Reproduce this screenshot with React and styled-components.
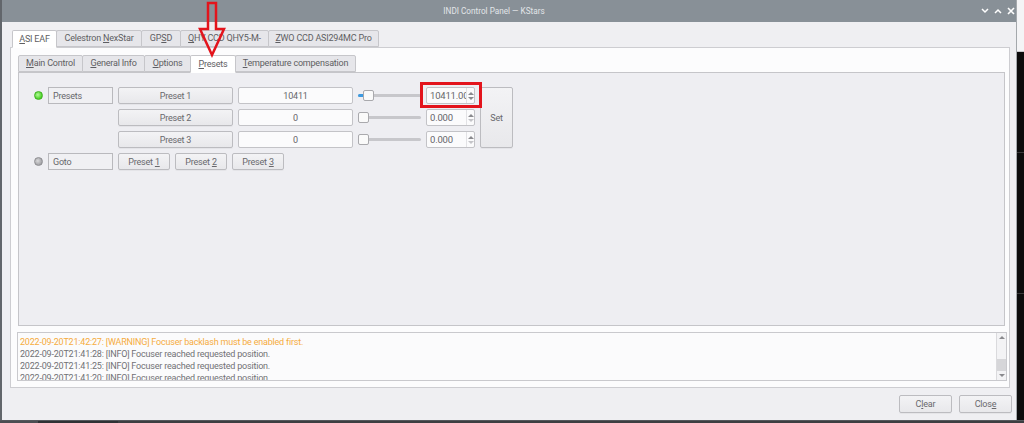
import React from 'react';
import styled, { createGlobalStyle } from 'styled-components';

const GlobalStyle = createGlobalStyle`
  html, body {
    margin: 0;
    padding: 0;
    background: #1a1a1a;
    overflow: hidden;
  }
  * {
    box-sizing: border-box;
  }
`;

const Screen = styled.div`
  width: 1024px;
  height: 423px;
  display: flex;
  flex-direction: column;
  font-family: Roboto, "Liberation Sans", sans-serif;
  font-size: 9px;
  letter-spacing: -0.2px;
  color: #6a6a6e;
  position: relative;
`;

const ScreenRow = styled.div`
  display: flex;
  height: 420px;
`;

const BottomStrip = styled.div`
  flex: 1;
  display: flex;
  background: #3c3e41;
  border-top: 1px solid #55585c;
`;

const BottomSeg = styled.div`
  width: ${(p) => p.$w}px;
  background: ${(p) => p.$bg};
`;

const Window = styled.div`
  width: 1017px;
  display: flex;
  flex-direction: column;
  border-left: 2px solid #62666b;
  border-right: 1px solid #a4a8ac;
  background: #efeff2;
`;

const DesktopStrip = styled.div`
  flex: 1;
  display: flex;
  flex-direction: column;
  background: #0c0c0c;
`;

const DesktopTop = styled.div`
  height: 52px;
  background: #f4f4f6;
  border-bottom: 1px solid #c9c9cc;
`;

const DesktopLine = styled.div`
  height: 1px;
  margin-top: ${(p) => p.$mt}px;
  background: #3a3a3a;
`;

const TitleBar = styled.div`
  height: 22px;
  background: #889097;
  display: flex;
  align-items: center;
  position: relative;
  justify-content: center;
`;

const TitleText = styled.div`
  color: #e2e5e8;
  font-size: 8.2px;
  letter-spacing: 0;
  margin-right: 30px;
`;

const TitleButtons = styled.div`
  position: absolute;
  right: 1px;
  top: 0;
  height: 22px;
  display: flex;
  align-items: center;
  gap: 4px;
`;

const TitleBtn = styled.div`
  width: 9px;
  height: 9px;
  display: flex;
  align-items: center;
  justify-content: center;
`;

const Body = styled.div`
  flex: 1;
  display: flex;
  flex-direction: column;
  padding: 8px 4px 0 8px;
`;

const TabBar = styled.div`
  display: flex;
  align-items: flex-end;
  height: 17px;
  padding-left: ${(p) => p.$pl || 0}px;
  position: relative;
  z-index: 1;
`;

const Tab = styled.div`
  height: ${(p) => (p.$active ? 18 : 17)}px;
  width: ${(p) => p.$w}px;
  line-height: ${(p) => (p.$active ? 17 : 15)}px;
  text-align: center;
  background: ${(p) => (p.$active ? '#ffffff' : '#e6e6ea')};
  border: 1px solid #c6c6ca;
  border-bottom: ${(p) => (p.$active ? '1px solid #ffffff' : '1px solid #c6c6ca')};
  margin-right: -1px;
  margin-bottom: ${(p) => (p.$active ? -1 : 0)}px;
  border-radius: 2px 2px 0 0;
  color: #5e5e62;
  white-space: nowrap;
`;

const OuterPane = styled.div`
  width: 1000px;
  height: 341px;
  background: #fcfcfd;
  border: 1px solid #cdcdd1;
  padding: 7px 4px 6px 7px;
  display: flex;
  flex-direction: column;
`;

const InnerPane = styled.div`
  height: 254px;
  background: #eeeef2;
  border: 1px solid #c5c5c9;
  padding: 14px 0 0 14px;
`;

const Grid = styled.div`
  display: grid;
  grid-template-columns: 10px 65px 115px 115px 63px 49px 33px;
  grid-auto-rows: 17px;
  column-gap: 5px;
  row-gap: 5px;
  align-items: center;
`;

const Led = styled.div`
  width: 9px;
  height: 9px;
  border-radius: 50%;
  justify-self: center;
  background: ${(p) =>
    p.$on
      ? 'radial-gradient(circle at 40% 40%, #b4fa9a, #48d024 70%)'
      : 'radial-gradient(circle at 40% 40%, #dadadc, #a2a2a6 70%)'};
  border: 1px solid ${(p) => (p.$on ? '#40b022' : '#8e8e92')};
`;

const LabelBox = styled.div`
  height: 17px;
  border: 1px solid #b9b9bd;
  background: #f0f0f3;
  padding-left: 4px;
  display: flex;
  align-items: center;
  color: #66666a;
  grid-column: 2;
`;

const Button = styled.div`
  height: ${(p) => p.$h || 17}px;
  width: ${(p) => (p.$w ? `${p.$w}px` : 'auto')};
  border: 1px solid #bcbcc0;
  border-radius: 2px;
  background: linear-gradient(#f3f3f5, #e8e8eb);
  display: flex;
  align-items: center;
  justify-content: center;
  color: #68686c;
  white-space: pre;
  grid-column: ${(p) => p.$col || 'auto'};
  grid-row: ${(p) => p.$row || 'auto'};
  align-self: ${(p) => p.$self || 'center'};
  box-shadow: 0 1px 0 rgba(0, 0, 0, 0.04);
`;

const ValueBox = styled.div`
  height: 17px;
  border: 1px solid #c3c3c7;
  border-radius: 2px;
  background: #fbfbfc;
  display: flex;
  align-items: center;
  justify-content: center;
  color: #66666a;
  grid-column: 4;
`;

const Slider = styled.div`
  height: 17px;
  position: relative;
  display: flex;
  align-items: center;
  grid-column: 5;
`;

const Track = styled.div`
  flex: 1;
  height: 3px;
  border-radius: 2px;
  background: #c7c7cb;
  overflow: hidden;
  display: flex;
`;

const TrackFill = styled.div`
  height: 3px;
  background: #3d9ae0;
`;

const Handle = styled.div`
  position: absolute;
  top: 3px;
  width: 11px;
  height: 11px;
  border: 1px solid #a9a9ad;
  border-radius: 2px;
  background: #fafafa;
`;

const SpinWrap = styled.div`
  grid-column: 6;
  position: relative;
  height: 17px;
`;

const Spin = styled.div`
  height: 17px;
  border: 1px solid #c3c3c7;
  border-radius: 2px;
  background: #fbfbfc;
  display: flex;
  align-items: stretch;
  overflow: hidden;
`;

const SpinText = styled.div`
  width: 39px;
  padding-left: 3px;
  line-height: 15px;
  overflow: hidden;
  white-space: nowrap;
  color: #66666a;
  font-size: 9.5px;
`;

const SpinArrows = styled.div`
  flex: 1;
  display: flex;
  flex-direction: column;
  align-items: center;
  justify-content: center;
  gap: 2px;
  border-left: 1px solid #e2e2e5;
`;

const Arrow = styled.div`
  width: 0;
  height: 0;
  border-left: 3px solid transparent;
  border-right: 3px solid transparent;
  ${(p) =>
    p.$up
      ? `border-bottom: 3px solid ${p.$c};`
      : `border-top: 3px solid ${p.$c};`}
`;

const Highlight = styled.div`
  position: absolute;
  left: -6px;
  top: -5px;
  width: 62px;
  height: 26px;
  border: 3px solid #e3141c;
  pointer-events: none;
`;

const GotoButtons = styled.div`
  grid-column: 3 / span 3;
  display: flex;
  gap: 5px;
`;

const LogBox = styled.div`
  margin-top: 6px;
  margin-left: -1px;
  height: 49px;
  width: 990px;
  background: #fbfbfc;
  border: 1px solid #c9c9cd;
  display: flex;
  overflow: hidden;
`;

const LogLines = styled.div`
  flex: 1;
  padding: 3px 0 0 2px;
  line-height: 12px;
  overflow: hidden;
`;

const LogLine = styled.div`
  white-space: nowrap;
  color: ${(p) => (p.$warn ? '#f6ac40' : '#717175')};
`;

const ScrollBar = styled.div`
  width: 10px;
  border-left: 1px solid #dadadd;
  display: flex;
  flex-direction: column;
  align-items: center;
  background: #f3f3f5;
`;

const ScrollBtn = styled.div`
  height: 9px;
  display: flex;
  align-items: center;
  justify-content: center;
`;

const ScrollTrack = styled.div`
  flex: 1;
  width: 100%;
  display: flex;
  flex-direction: column;
  justify-content: flex-end;
`;

const ScrollThumb = styled.div`
  height: 12px;
  background: #d6d6d9;
`;

const Footer = styled.div`
  display: flex;
  justify-content: flex-end;
  gap: 7px;
  padding: 7px 0 0 0;
`;

const RedArrow = styled.svg`
  position: absolute;
  left: 198px;
  top: 0;
  z-index: 10;
`;

const U = styled.span`
  text-decoration: underline;
  text-underline-offset: 1px;
`;

const presets = [
  { name: 'Preset 1', value: '10411', spin: '10411.000', fill: 5 },
  { name: 'Preset 2', value: '0', spin: '0.000', fill: 0 },
  { name: 'Preset 3', value: '0', spin: '0.000', fill: 0 },
];

const ChevronIcon = ({ up }) => (
  <svg width="8" height="6" viewBox="0 0 8 6">
    <path
      d={up ? 'M1 5 L4 2 L7 5' : 'M1 1 L4 4 L7 1'}
      stroke="#ffffff"
      strokeWidth="1.5"
      fill="none"
    />
  </svg>
);

const CloseIcon = () => (
  <svg width="8" height="8" viewBox="0 0 8 8">
    <path d="M1 1 L7 7 M7 1 L1 7" stroke="#ffffff" strokeWidth="1.6" />
  </svg>
);

const App = () => {
  return (
    <Screen>
      <GlobalStyle />
      <ScreenRow>
        <Window>
          <TitleBar>
            <TitleText>INDI Control Panel — KStars</TitleText>
            <TitleButtons>
              <TitleBtn>
                <ChevronIcon />
              </TitleBtn>
              <TitleBtn>
                <ChevronIcon up />
              </TitleBtn>
              <TitleBtn>
                <CloseIcon />
              </TitleBtn>
            </TitleButtons>
          </TitleBar>
          <Body>
            <TabBar $pl={2}>
              <Tab $active $w={45}>
                <U>A</U>SI EAF
              </Tab>
              <Tab $w={86}>
                Celestron <U>N</U>exStar
              </Tab>
              <Tab $w={40}>
                GP<U>S</U>D
              </Tab>
              <Tab $w={89}>
                <U>Q</U>HY CCD QHY5-M-
              </Tab>
              <Tab $w={111}>
                <U>Z</U>WO CCD ASI294MC Pro
              </Tab>
            </TabBar>
            <OuterPane>
              <TabBar>
                <Tab $w={65}>
                  <U>M</U>ain Control
                </Tab>
                <Tab $w={63}>
                  <U>G</U>eneral Info
                </Tab>
                <Tab $w={47}>
                  <U>O</U>ptions
                </Tab>
                <Tab $active $w={46}>
                  <U>P</U>resets
                </Tab>
                <Tab $w={121}>
                  <U>T</U>emperature compensation
                </Tab>
              </TabBar>
              <InnerPane>
                <Grid>
                  {presets.map((p, i) => (
                    <React.Fragment key={p.name}>
                      {i === 0 && <Led $on />}
                      {i === 0 && <LabelBox>Presets</LabelBox>}
                      <Button $col={3}>{p.name}</Button>
                      <ValueBox>{p.value}</ValueBox>
                      <Slider>
                        <Track>
                          <TrackFill style={{ width: p.fill }} />
                        </Track>
                        <Handle style={{ left: p.fill }} />
                      </Slider>
                      <SpinWrap>
                        <Spin>
                          <SpinText>{p.spin}</SpinText>
                          <SpinArrows>
                            <Arrow $up $c="#8a8a8e" />
                            <Arrow $c={i === 0 ? '#8a8a8e' : '#c4c4c8'} />
                          </SpinArrows>
                        </Spin>
                        {i === 0 && <Highlight />}
                      </SpinWrap>
                      {i === 0 && (
                        <Button $col={7} $row="1 / span 3" $self="stretch" $h={61}>
                          Set
                        </Button>
                      )}
                    </React.Fragment>
                  ))}
                  <Led />
                  <LabelBox>Goto</LabelBox>
                  <GotoButtons>
                    <Button $w={52}>
                      Preset <U>1</U>
                    </Button>
                    <Button $w={52}>
                      Preset <U>2</U>
                    </Button>
                    <Button $w={52}>
                      Preset <U>3</U>
                    </Button>
                  </GotoButtons>
                </Grid>
              </InnerPane>
              <LogBox>
                <LogLines>
                  <LogLine $warn>
                    2022-09-20T21:42:27: [WARNING] Focuser backlash must be enabled first.
                  </LogLine>
                  <LogLine>2022-09-20T21:41:28: [INFO] Focuser reached requested position.</LogLine>
                  <LogLine>2022-09-20T21:41:25: [INFO] Focuser reached requested position.</LogLine>
                  <LogLine>2022-09-20T21:41:20: [INFO] Focuser reached requested position.</LogLine>
                </LogLines>
                <ScrollBar>
                  <ScrollBtn>
                    <Arrow $up $c="#8a8a8e" />
                  </ScrollBtn>
                  <ScrollTrack>
                    <ScrollThumb />
                  </ScrollTrack>
                  <ScrollBtn>
                    <Arrow $c="#8a8a8e" />
                  </ScrollBtn>
                </ScrollBar>
              </LogBox>
            </OuterPane>
            <Footer>
              <Button $w={53} $h={18}>
                C<U>l</U>ear
              </Button>
              <Button $w={53} $h={18}>
                Clos<U>e</U>
              </Button>
            </Footer>
          </Body>
        </Window>
        <DesktopStrip>
          <DesktopTop />
          <DesktopLine $mt={100} />
          <DesktopLine $mt={140} />
        </DesktopStrip>
      </ScreenRow>
      <BottomStrip>
        <BottomSeg $w={38} $bg="#4b4e52" />
        <BottomSeg $w={80} $bg="#2f3134" />
      </BottomStrip>
      <RedArrow width="30" height="58" viewBox="0 0 30 58">
        <path
          d="M10 3 L18 3 L18 29 L26 29 L14 55 L2 29 L10 29 Z"
          fill="none"
          stroke="#e3141c"
          strokeWidth="2.5"
          strokeLinejoin="miter"
        />
      </RedArrow>
    </Screen>
  );
};

export default App;
